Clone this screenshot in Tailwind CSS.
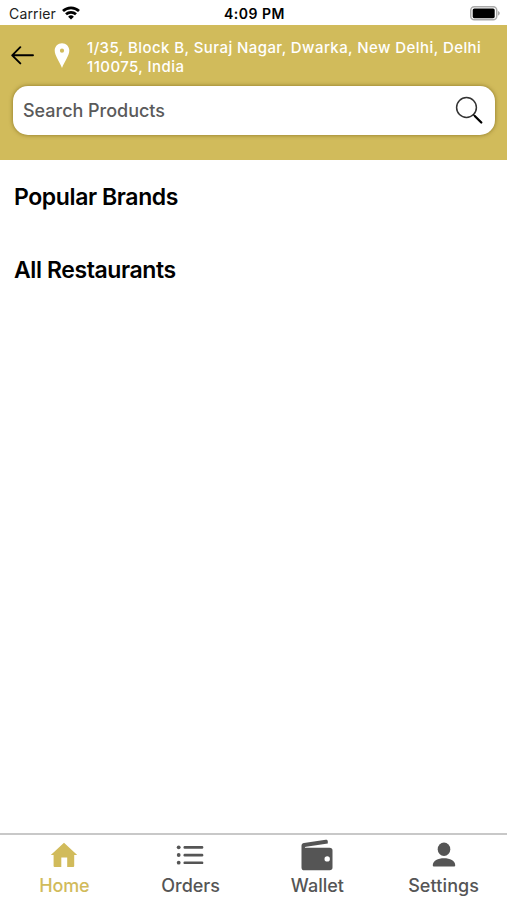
<!DOCTYPE html>
<html lang="en">
<head>
    <meta charset="UTF-8">
    <meta name="viewport" content="width=device-width, initial-scale=1.0">
    <title>Home</title>
    <script src="https://cdn.jsdelivr.net/npm/@tailwindcss/browser@4"></script>
</head>
<body class="bg-white font-['Inter',sans-serif]">
    <div class="flex flex-col h-screen overflow-hidden">
        <!-- Status Bar -->
        <div class="grid grid-cols-3 items-center h-[25px] shrink-0 pl-[9px] pr-[7px] pt-[2px] text-black">
            <div class="flex items-center gap-[6px]">
                <span class="text-[14px] leading-5 tracking-[0.15px] text-[#222]">Carrier</span>
                <svg class="w-[18px] h-[14px] -mt-[2px]" viewBox="0 0 18 14" fill="none" stroke="#000" stroke-width="2.7">
                    <path d="M1 5.1a11.6 11.6 0 0 1 16 0"/>
                    <path d="M4 8.3a7.3 7.3 0 0 1 10 0"/>
                    <path d="M9 13.6L6.1 10.8a4.1 4.1 0 0 1 5.8 0z" fill="#000" stroke="none"/>
                </svg>
            </div>
            <span class="text-center text-[14px] leading-5 font-semibold tracking-[0.5px]">4:09 PM</span>
            <svg class="justify-self-end w-[30px] h-[15px]" viewBox="0 0 30 15">
                <rect x=".75" y=".75" width="26" height="13" rx="3.5" fill="#fff" stroke="#aaa" stroke-width="1.5"/>
                <rect x="2.7" y="2.4" width="22" height="9.8" rx="1.6" fill="#000"/>
                <path d="M28 5v4.6c2.4-.8 2.4-3.8 0-4.6z" fill="#aaa"/>
            </svg>
        </div>

        <!-- Header -->
        <header class="h-[135px] shrink-0 bg-[#d1bb5b] px-[13px] pt-[14px]">
            <div class="flex h-[47px]">
                <svg class="w-[24px] h-[20px] -ml-[2px] mt-[6px] shrink-0" viewBox="0 0 24 20" fill="none" stroke="#000" stroke-width="1.9" stroke-linecap="round" stroke-linejoin="round">
                    <path d="M22 10.3H1.5M9.3 2.2L1.2 10.3l8.1 8.1"/>
                </svg>
                <svg class="w-[16px] h-[26px] ml-[19px] mt-[4px] shrink-0" viewBox="0 0 16 26" fill="#fff" fill-rule="evenodd">
                    <path d="M8 .2C3.9.2.7 3.4.7 7.5.7 12.5 5.5 18.5 8 25 10.5 18.5 15.3 12.5 15.3 7.5 15.3 3.4 12.1.2 8 .2zM8 5.6a2.1 2.1 0 1 1 0 4.200 2.1 2.1 0 0 1 0-4.200z"/>
                </svg>
                <p class="ml-[17px] -mt-px text-[15px] leading-[19px] font-medium tracking-[0.42px] text-white whitespace-nowrap">1/35, Block B, Suraj Nagar, Dwarka, New Delhi, Delhi<br>110075, India</p>
            </div>
            <div class="flex items-center justify-between w-[482px] h-[49px] rounded-[15px] bg-white pl-[10px] pr-[11px] shadow-[0_0_4px_rgba(90,70,0,0.6)]">
                <span class="pt-px text-[18px] leading-6 font-medium tracking-[-0.02px] text-[#5a5a5a]">Search Products</span>
                <svg class="w-[29px] h-[29px]" viewBox="0 0 29 29" fill="none" stroke-linecap="round">
                    <circle cx="11.5" cy="11.5" r="9.9" stroke="#333" stroke-width="1.5"/>
                    <path d="M18.5 18.7L20 20.2" stroke="#111" stroke-width="1.5"/>
                    <path d="M20 20.2L26.3 26.5" stroke="#000" stroke-width="2.3"/>
                </svg>
            </div>
        </header>

        <!-- Content -->
        <main class="flex-1 px-[14px] pt-[21px] text-black">
            <h2 class="text-[23px] leading-8 font-semibold tracking-[-0.4px]">Popular Brands</h2>
            <h2 class="mt-[41px] text-[23px] leading-8 font-semibold tracking-[-0.4px]">All Restaurants</h2>
        </main>

        <!-- Bottom Tabs -->
        <nav class="grid grid-cols-4 h-[67px] shrink-0 border-t-2 border-[#c8c8c8] text-[18px] leading-6 font-medium text-[#555]">
            <div class="flex flex-col items-center pl-[2px] text-[#d1bb5b]">
                <svg class="w-[28px] h-[39px]" viewBox="0 0 28 39" fill="currentColor">
                    <path d="M14 7.800L27.2 20H24.2V31a1 1 0 0 1-1 1H17.2V22.5H11.3V32H4.600a1 1 0 0 1-1-1V20H.8z"/>
                </svg>
                <span class="tracking-[-0.2px]">Home</span>
            </div>
            <div class="flex flex-col items-center">
                <svg class="w-[28px] h-[39px]" viewBox="0 0 28 39" fill="currentColor">
                    <circle cx="2.7" cy="12.3" r="1.9"/>
                    <circle cx="2.7" cy="20" r="1.9"/>
                    <circle cx="2.7" cy="27.7" r="1.9"/>
                    <rect x="7.5" y="11" width="19.8" height="2.7" rx="1.2"/>
                    <rect x="7.5" y="18.7" width="19.8" height="2.7" rx="1.2"/>
                    <rect x="7.5" y="26.4" width="19.8" height="2.7" rx="1.2"/>
                </svg>
                <span class="pl-px">Orders</span>
            </div>
            <div class="flex flex-col items-center">
                <svg class="w-[32px] h-[39px]" viewBox="0 0 32 39" fill="currentColor" fill-rule="evenodd">
                    <path d="M.5 10.8C.5 9.2 1.3 8.3 3 8L24.7 4.8C26 4.6 26.8 5.3 26.8 6.5V8.6L5 11.7C3.5 12 3.5 12.7 4.8 12.7H28.5C30.5 12.7 31.5 13.7 31.5 15.5V32.5C31.5 34.3 30.5 35.3 28.6 35.3H3.5C1.6 35.3.5 34.3.5 32.4zM26.2 21.2a2.7 2.7 0 1 0 0 5.4 2.7 2.7 0 0 0 0-5.4z"/>
                </svg>
                <span class="pl-px">Wallet</span>
            </div>
            <div class="flex flex-col items-center">
                <svg class="w-[24px] h-[39px]" viewBox="0 0 24 39" fill="currentColor">
                    <ellipse cx="12" cy="14.2" rx="6.3" ry="6.7"/>
                    <path d="M.8 30.2C.8 25.7 6 23.3 12 23.3S23.2 25.7 23.2 30.2C23.2 31.2 22.7 31.6 21.8 31.6H2.2C1.3 31.6.8 31.2.8 30.2z"/>
                </svg>
                <span class="tracking-[0.1px]">Settings</span>
            </div>
        </nav>
    </div>
</body>
</html>
